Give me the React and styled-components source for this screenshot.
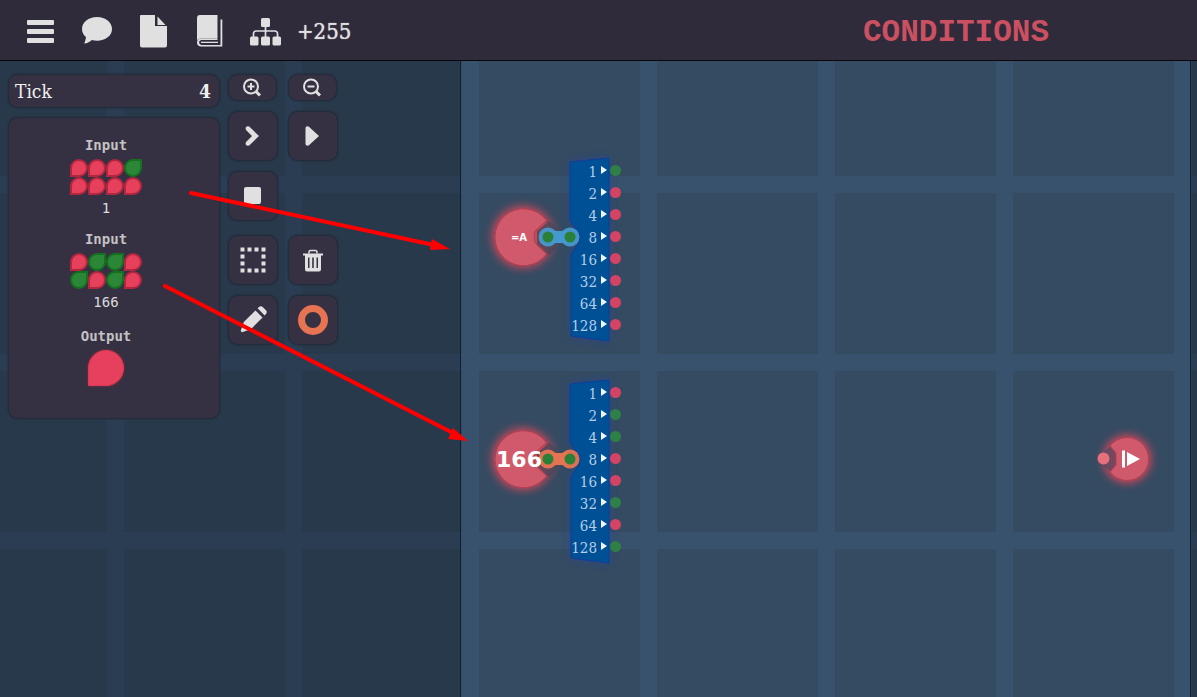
import React from "react";
import styled, { createGlobalStyle, css } from "styled-components";

const GlobalStyle = createGlobalStyle`
  *, *::before, *::after { box-sizing: border-box; }
  html, body, #root { height: 100%; }
  body { margin: 0; background: #28394b; }
  button { font: inherit; color: inherit; cursor: pointer; }
`;

const slab = `"DejaVu Serif Condensed", "DejaVu Serif", serif`;
const mono = `"DejaVu Sans Mono", monospace`;
const ink = "#e0e0e0";

const gridLines = (band, cell, x, y) => css`
  background-color: ${cell};
  background-image:
    linear-gradient(90deg, ${band} 17px, transparent 17px),
    linear-gradient(${band} 17px, transparent 17px);
  background-size: 178px 178px;
  background-position: ${x}px ${y}px;
`;

const Page = styled.div`
  display: flex;
  flex-direction: column;
  min-height: 100%;
  color: ${ink};
  font-family: ${slab};
`;

const Header = styled.header`
  display: flex;
  align-items: center;
  gap: 16px;
  height: 61px;
  padding: 2px 148px 0 25px;
  background: #2f2b3b;
  border-bottom: 1px solid #07070c;
`;

const Nav = styled.nav`
  display: flex;
  gap: 24px;
`;

const NavButton = styled.button`
  display: flex;
  width: 32px;
  padding: 0;
  border: 0;
  background: none;

  svg { display: block; fill: ${ink}; overflow: visible; }
`;

const Score = styled.span`
  padding-top: 2px;
  font-size: 22px;
  line-height: 28px;
  text-shadow: 0 0 1px ${ink};
`;

const Title = styled.h1`
  margin: 0 0 0 auto;
  padding-top: 3px;
  color: #cb5062;
  font: bold 31px/34px "Liberation Mono", monospace;
`;

const Workspace = styled.main`
  position: relative;
  flex: 1;
  display: grid;
  grid-template-columns: 460px 1fr 6px;
  ${gridLines("#2b3d53", "#28394b", 107, 115)}
`;

const Sidebar = styled.aside`
  display: flex;
  align-items: flex-start;
  gap: 8px;
  padding: 13px 8px;
`;

const Column = styled.div`
  display: flex;
  flex-direction: column;
  gap: 9px;
  width: 212px;
`;

const surface = css`
  background: #363142;
  border: 1px solid #222c3a;
  box-shadow: 0 0 2px #1f2836;
`;

const TickBox = styled.div`
  ${surface}
  display: flex;
  justify-content: space-between;
  align-items: center;
  height: 34px;
  padding: 0 8px 0 6px;
  border-radius: 10px;
  font-size: 19px;
  line-height: 24px;
  color: #f0f0f0;
`;

const Signals = styled.section`
  ${surface}
  display: flex;
  flex-direction: column;
  align-items: center;
  gap: 12px;
  padding: 17px 16px 32px 0;
  border-radius: 10px;
`;

const Signal = styled.div`
  display: flex;
  flex-direction: column;
  align-items: center;
  gap: 4px;

  &:last-child { padding-top: 3px; }
`;

const SignalName = styled.h2`
  margin: 0;
  color: #c4c2c4;
  font: bold 14px/20px ${mono};
`;

const SignalValue = styled.output`
  color: #dcdcde;
  font: 14px/18px ${mono};
`;

const Bits = styled.div`
  display: grid;
  grid-template-columns: repeat(4, 18px);
`;

const Leaf = styled.span`
  width: ${(p) => p.$size || 18}px;
  height: ${(p) => p.$size || 18}px;
  border: 2px solid ${(p) => (p.$on ? "#14721f" : "#b3263f")};
  border-radius: ${(p) => (p.$on ? "50% 0 50% 50%" : "50% 50% 50% 0")};
  background: ${(p) => (p.$on ? "#2c8638" : "#e7405d")};
  ${(p) => p.$size && css`border: 1px solid #d83a56; box-shadow: 0 0 2px #b3263f;`}
`;

const Tools = styled.div`
  display: flex;
  flex-direction: column;
  gap: 14px;
`;

const ToolGroup = styled.div`
  display: grid;
  grid-template-columns: 50px 50px;
  gap: 10px;
`;

const ToolButton = styled.button`
  ${surface}
  display: flex;
  align-items: center;
  justify-content: center;
  width: ${(p) => (p.$small ? 49 : 50)}px;
  height: ${(p) => (p.$small ? 27 : 50)}px;
  padding: 0;
  border-radius: 10px;

  svg { display: block; fill: ${ink}; overflow: visible; }
`;

const Board = styled.section`
  position: relative;
  min-height: 580px;
  border: solid #10202f;
  border-width: 0 1px;
  ${gridLines("#38516d", "#354b62", 179, 115)}
`;

const Placed = styled.div`
  position: absolute;
  top: ${(p) => p.$top}px;
  ${(p) => (p.$right !== undefined ? `right: ${p.$right}px;` : `left: ${p.$left}px;`)}

  > svg { display: block; overflow: visible; }
`;

const NodeLabel = styled.span`
  position: absolute;
  left: 14px;
  top: 88px;
  width: 66px;
  text-align: center;
  color: #fff;
  font: bold ${(p) => (p.$small ? 10 : 22)}px/28px "DejaVu Sans", sans-serif;
`;

const PinList = styled.ul`
  position: absolute;
  left: 78px;
  top: 23px;
  margin: 0;
  padding: 0;
  list-style: none;
`;

const PinRow = styled.li`
  display: flex;
  align-items: center;
  justify-content: flex-end;
  gap: 4px;
  width: 71px;
  height: 22px;
  color: #b4cfe8;
  font-size: 15px;
  line-height: 22px;

  span { padding-top: 4px; }
`;

const PinArrow = styled.i`
  border: solid transparent;
  border-width: 4px 0 4px 6px;
  border-left-color: #eef6ff;
`;

const Pin = styled.i`
  width: 11px;
  height: 11px;
  margin-left: -1px;
  border-radius: 50%;
  background: ${(p) => (p.$on ? "#2e8046" : "#d34364")};
`;

const Overlay = styled.svg`
  position: absolute;
  left: 0;
  top: 0;
  pointer-events: none;
`;

const navIcons = [
  ["Menu", <>
    <rect x="2" y="6" width="27" height="5" rx="1" />
    <rect x="2" y="15" width="27" height="5" rx="1" />
    <rect x="2" y="24" width="27" height="5" rx="1" />
  </>],
  ["Comments", <path d="M16 3C7.500 3 1 8 1 15c0 3.500 1.500 6 4 8-.3 2.500-.9 4.500-1.800 6.500 3.200-.4 6-1.700 7.600-3.600 1.600.5 3.400.8 5.200.8 8.500 0 15-5 15-11.700S24.500 3 16 3Z" />],
  ["New file", <>
    <path d="M4 1h14v11h12v19.500a2 2 0 0 1-2 2H5a2 2 0 0 1-2-2V2a1 1 0 0 1 1-1Z" />
    <path d="M20.500 2.500l8 8.500h-8Z" />
  </>],
  ["Manual", <>
    <path d="M7 1h17.500v23.500H8c-2 0-3.200.8-4 2V4a3 3 0 0 1 3-3Z" />
    <path d="M27.500 5.500h1.800v27H8.500c-3 0-4.500-1.700-4.500-4.100s1.700-3.800 4.500-3.800h16v1.300H8.800c-1.800 0-2.700 1-2.700 2.400s1 2.600 2.700 2.600h18.700Z" />
    <path d="M8 27.700h17v1.300H8Z" />
  </>],
  ["Hierarchy", <>
    <rect x="12" y="4" width="9" height="9" rx="1.500" />
    <rect x="1" y="22.500" width="8.500" height="9" rx="1.500" />
    <rect x="12" y="22.500" width="9" height="9" rx="1.500" />
    <rect x="23.500" y="22.500" width="8.500" height="9" rx="1.500" />
    <path d="M4.500 23v-3.500a2.500 2.500 0 0 1 2.500-2.500h19a2.500 2.500 0 0 1 2.500 2.500V23M16.500 12v11" fill="none" stroke={ink} strokeWidth="1.700" />
  </>],
];

function Magnifier({ plus }) {
  return (
    <svg width="18" height="18" viewBox="0 0 18 18" aria-hidden="true">
      <g fill="none" stroke={ink} strokeWidth="2">
        <circle cx="7" cy="7.500" r="7" />
        <path d="M12 12.500l4 4" strokeWidth="3" />
        <path d={plus ? "M3.500 7.500h7M7 4v7" : "M3.500 7.500h7"} />
      </g>
    </svg>
  );
}

const icons = {
  next: <path d="M3.500 4.600C2 3 2.500 1 4 .5 5.200 0 6.200.4 7 1.300L16 10 7 18.700C6.200 19.600 5.200 20 4 19.500 2.500 19 2 17 3.500 15.400L9 10Z" />,
  play: <path d="M2.500 2.500C2.500 0 5-.2 6.500 1.300L16 10 6.500 18.700C5 20.200 2.500 20 2.500 17.500Z" />,
  stop: <rect x="1" y="1" width="17" height="17" rx="2" />,
  trash: <g transform="translate(0 2)">
    <path d="M0 1.500h20v2H0Z" />
    <path d="M6 1.500V0a1.500 1.500 0 0 1 1.500-1.500h5A1.500 1.500 0 0 1 14 0v1.500" fill="none" stroke={ink} strokeWidth="1.500" />
    <path fillRule="evenodd" d="M2 3h16v14.500a2 2 0 0 1-2 2H4a2 2 0 0 1-2-2ZM5 5.500v10.500h1.500V5.500ZM9.200 5.500v10.500h1.600V5.500ZM13.500 5.500v10.500H15V5.500Z" />
  </g>,
  pencil: <g transform="translate(10 10) rotate(45)">
    <path d="M-5-11.500v-1.500a3 3 0 0 1 3-3h4a3 3 0 0 1 3 3v1.500Z" />
    <path d="M-5-8.500H5V8L1 16.500h-2L-5 8Z" />
  </g>,
  select: <>
    {[0, 7, 14, 21].flatMap((a) =>
      [0, 7, 14, 21].filter((b) => a % 21 === 0 || b % 21 === 0).map((b) => (
        <rect key={`${a}-${b}`} x={a - 2.500} y={b - 2.500} width="4" height="4" />
      ))
    )}
  </>,
  ring: <circle cx="10" cy="10" r="11.500" fill="none" stroke="#e67352" strokeWidth="7" />,
};

function Tool({ name, icon }) {
  return (
    <ToolButton type="button" aria-label={name}>
      <svg width="20" height="20" viewBox="0 0 20 20" aria-hidden="true">{icons[icon]}</svg>
    </ToolButton>
  );
}

function InputSignal({ bits, value }) {
  return (
    <Signal>
      <SignalName>Input</SignalName>
      <Bits>{[...bits].map((b, i) => <Leaf key={i} $on={b === "1"} />)}</Bits>
      <SignalValue>{value}</SignalValue>
    </Signal>
  );
}

function ByteSource({ id, label, small, wire, bits, top }) {
  return (
    <Placed $left={11} $top={top}>
      <svg width="162" height="210" viewBox="0 0 162 210" aria-hidden="true">
        <defs>
          <filter id={`${id}-glow`} x="-40%" y="-40%" width="180%" height="180%">
            <feGaussianBlur stdDeviation="4" />
          </filter>
        </defs>
        <circle cx="51" cy="101" r="31" fill="#f04658" opacity=".8" filter={`url(#${id}-glow)`} />
        <path d="M74.500 84.500A28.500 28.500 0 1 0 74.500 118L64 108q-2-2-2-7t2-7Z" fill="#d05a6b" stroke="#b13e52" />
        <path d="M77 85L65 95v13l12 11 8-7V91Z" fill="#4a4759" opacity=".8" />
        <path d="M98 26L137 22V205L99 200V119C101 113 108 109 108 102S101 91 98 84Z" fill="#1b3fae" opacity=".6" filter={`url(#${id}-glow)`} />
        <path d="M98 26L137 22V205L99 200V119C101 113 108 109 108 102S101 91 98 84Z" fill="#005096" stroke="#0d3f9c" />
        <path d="M76 101h22" stroke={wire} strokeWidth="12" />
        {[76, 98].map((x) => (
          <g key={x}>
            <circle cx={x} cy="101" r="9.500" fill={wire} opacity=".95" />
            <circle cx={x} cy="101" r="5.500" fill="#2b8038" />
          </g>
        ))}
      </svg>
      <NodeLabel $small={small}>{label}</NodeLabel>
      <PinList>
        {[...bits].map((b, i) => (
          <PinRow key={i}>
            <span>{2 ** i}</span>
            <PinArrow />
            <Pin $on={b === "1"} />
          </PinRow>
        ))}
      </PinList>
    </Placed>
  );
}

function OutputNode() {
  return (
    <Placed $right={29} $top={365}>
      <svg width="74" height="66" viewBox="0 0 74 66" aria-hidden="true">
        <defs>
          <filter id="out-glow" x="-40%" y="-40%" width="180%" height="180%">
            <feGaussianBlur stdDeviation="4" />
          </filter>
        </defs>
        <circle cx="40" cy="33" r="24" fill="#f04658" opacity=".85" filter="url(#out-glow)" />
        <path d="M24 20l-8 6v14l8 6 5-8v-10Z" fill="#5a4a60" opacity=".8" />
        <path d="M23 20A21.500 21.500 0 1 1 23 46L29 39V27Z" fill="#d05a6b" stroke="#b13e52" />
        <circle cx="16.500" cy="32.500" r="6" fill="#e6707b" />
        <path d="M35 24.500h3v17h-3ZM40 26l13 7-13 7Z" fill="#fff" />
      </svg>
    </Placed>
  );
}

export default function App() {
  return (
    <Page>
      <GlobalStyle />
      <Header>
        <Nav>
          {navIcons.map(([name, shape]) => (
            <NavButton key={name} type="button" aria-label={name}>
              <svg width="32" height="34" viewBox="0 0 32 34" aria-hidden="true">{shape}</svg>
            </NavButton>
          ))}
        </Nav>
        <Score>+255</Score>
        <Title>CONDITIONS</Title>
      </Header>
      <Workspace>
        <Sidebar>
          <Column>
            <TickBox><span>Tick</span><b>4</b></TickBox>
            <Signals>
              <InputSignal bits="00010000" value="1" />
              <InputSignal bits="01101010" value="166" />
              <Signal>
                <SignalName>Output</SignalName>
                <Leaf $size={36} />
              </Signal>
            </Signals>
          </Column>
          <Tools>
            <ToolGroup>
              <ToolButton $small type="button" aria-label="Zoom in"><Magnifier plus /></ToolButton>
              <ToolButton $small type="button" aria-label="Zoom out"><Magnifier /></ToolButton>
              <Tool name="Step" icon="next" />
              <Tool name="Run" icon="play" />
              <Tool name="Stop" icon="stop" />
            </ToolGroup>
            <ToolGroup>
              <Tool name="Select" icon="select" />
              <Tool name="Delete" icon="trash" />
              <Tool name="Draw" icon="pencil" />
              <Tool name="Wire colour" icon="ring" />
            </ToolGroup>
          </Tools>
        </Sidebar>
        <Board>
          <ByteSource id="a" label="=A" small wire="#4599d0" bits="10000000" top={75} />
          <ByteSource id="b" label="166" wire="#e67352" bits="01100101" top={297} />
          <OutputNode />
        </Board>
        <Overlay width="480" height="400" viewBox="0 0 480 400" aria-hidden="true">
          <g stroke="#f00" strokeWidth="4" strokeLinecap="round">
            <path d="M191 132L434 184" />
            <path d="M165 225L453 372" />
          </g>
          <path d="M450 188L432 178L430 189Z M468 380L453 367L448 378Z" fill="#f00" />
        </Overlay>
      </Workspace>
    </Page>
  );
}
